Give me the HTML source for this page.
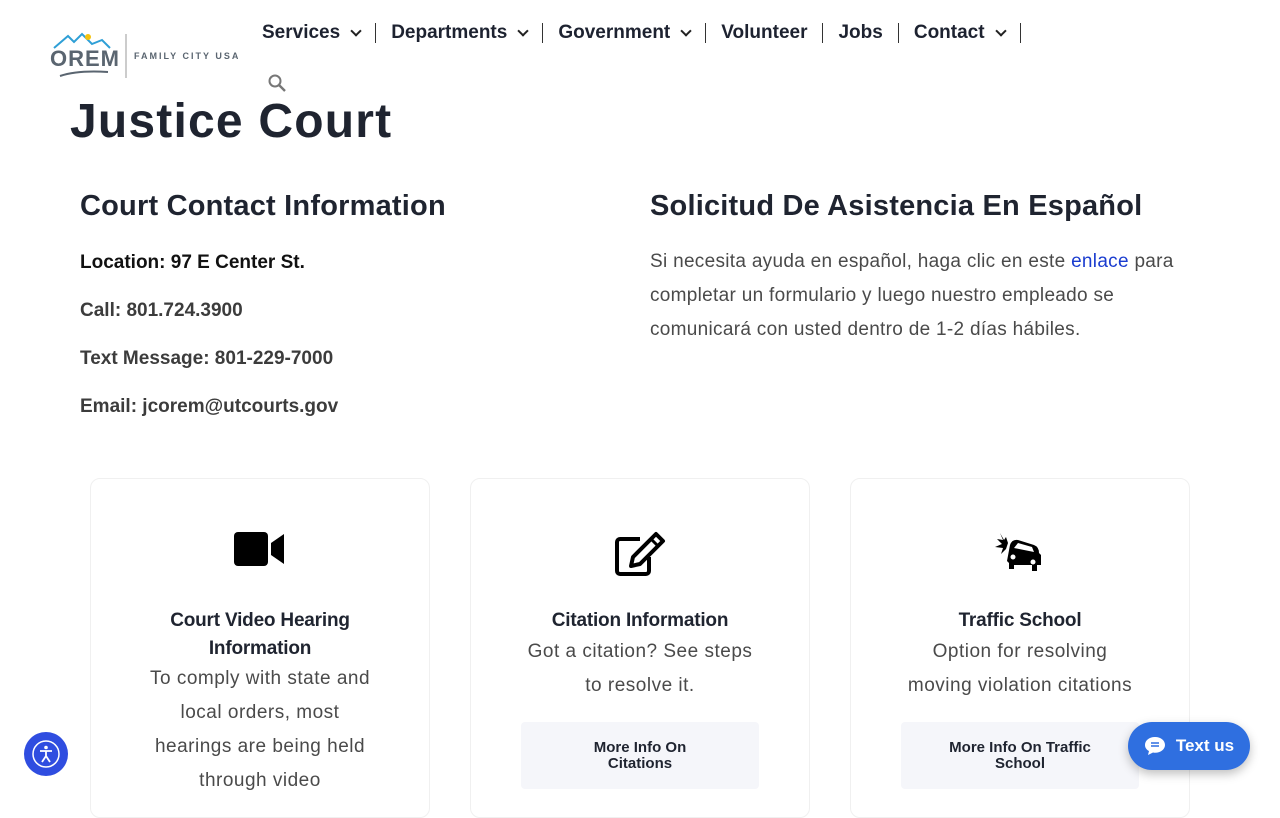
<!DOCTYPE html>
<html><head><meta charset="utf-8"><style>
*{margin:0;padding:0;box-sizing:border-box}
body{width:1280px;height:800px;overflow:hidden;background:#fff;font-family:"Liberation Sans",sans-serif;color:#1f2430;position:relative}
.nav{position:absolute;top:23px;left:262px;display:flex;align-items:center;font-weight:700;font-size:19px;color:#1d2230;letter-spacing:0}
.nav span{padding:0 15px;border-right:1px solid #333;line-height:20px;display:flex;align-items:center;gap:12px}
.nav span:first-child{padding-left:0}
.chev{width:8px;height:8px;border-right:2px solid #222;border-bottom:2px solid #222;transform:rotate(45deg);margin-top:-5px}
h1{position:absolute;left:70px;top:94px;font-size:48px;font-weight:700;color:#1f2430;letter-spacing:1.2px}
h2{font-size:29px;font-weight:700;color:#1f2430;letter-spacing:0.2px}
.l{position:absolute;left:80px;top:190px}
.l p{font-size:19px;font-weight:700;color:#3c3c3c;margin-top:24px;line-height:24px}
.l p:first-of-type{color:#111;margin-top:28px}
.r{position:absolute;left:650px;top:190px;width:560px}
.r p{font-size:19px;color:#4a4a4a;line-height:34px;margin-top:22px;letter-spacing:0.3px}
.r a{color:#1a3ccf;text-decoration:none}
.card{position:absolute;top:478px;width:340px;height:340px;border:1px solid #f0f0f0;border-radius:10px;text-align:center}
.card svg{position:absolute;left:50%;transform:translateX(-50%);top:52px}
.card h3{position:absolute;top:128px;width:100%;font-size:19px;font-weight:700;line-height:28px;color:#1f2430;letter-spacing:-0.2px}
.card .t{position:absolute;width:100%;font-size:19px;color:#4a4a4a;line-height:34px;letter-spacing:0.5px}
.btn{position:absolute;left:50px;top:243px;width:238px;height:67px;background:#f5f6fa;border-radius:4px;font-size:15px;font-weight:700;line-height:16px;display:flex;align-items:center;justify-content:center;color:#1f2430}
</style></head><body>
<svg style="position:absolute;left:48px;top:30px" width="190" height="52">
<path d="M6 18 L20 6 L26 12 L34 4 L44 14 L54 10 L62 18" fill="none" stroke="#2e9fd6" stroke-width="2"/>
<circle cx="40" cy="7" r="3" fill="#f4c20d"/>
<text x="2" y="36" font-family="Liberation Sans" font-weight="700" font-size="22" fill="#5a6570" letter-spacing="1">OREM</text>
<path d="M12 46 Q30 40 60 42" stroke="#5a6570" stroke-width="2" fill="none"/>
<line x1="78" y1="4" x2="78" y2="48" stroke="#999"/>
<text x="86" y="29" font-family="Liberation Sans" font-weight="700" font-size="9" fill="#5a6570" letter-spacing="2">FAMILY CITY USA</text>
</svg>
<div class="nav"><span>Services <i class="chev"></i></span><span>Departments <i class="chev"></i></span><span>Government <i class="chev"></i></span><span>Volunteer</span><span>Jobs</span><span>Contact <i class="chev"></i></span></div>
<svg style="position:absolute;left:268px;top:74px" width="18" height="18"><circle cx="7" cy="7" r="5.5" fill="none" stroke="#777" stroke-width="2"/><path d="M11 11 L17 17" stroke="#777" stroke-width="2.4"/></svg>
<h1>Justice Court</h1>
<div class="l"><h2>Court Contact Information</h2>
<p>Location: 97 E Center St.</p><p>Call: 801.724.3900</p><p>Text Message: 801-229-7000</p><p>Email: jcorem@utcourts.gov</p></div>
<div class="r"><h2>Solicitud De Asistencia En Español</h2>
<p>Si necesita ayuda en español, haga clic en este <a>enlace</a> para<br>completar un formulario y luego nuestro empleado se<br>comunicará con usted dentro de 1-2 días hábiles.</p></div>
<div class="card" style="left:90px"><svg width="52" height="36" viewBox="0 0 52 36"><rect x="0" y="1" width="34" height="34" rx="4"/><path d="M37 12 L50 3 V33 L37 24Z"/></svg>
<h3>Court Video Hearing<br>Information</h3><div class="t" style="top:183px">To comply with state and<br>local orders, most<br>hearings are being held<br>through video</div></div>
<div class="card" style="left:470px"><svg width="52" height="46" viewBox="0 0 52 46"><path d="M26 8 H6 a3 3 0 0 0 -3 3 V40 a3 3 0 0 0 3 3 H32 a3 3 0 0 0 3 -3 V26" fill="none" stroke="#000" stroke-width="4"/><path d="M42 3 L49 10 L26 33 L17 35 L19 26Z" fill="none" stroke="#000" stroke-width="4" stroke-linejoin="round"/><path d="M37 8 L44 15" stroke="#000" stroke-width="3"/></svg>
<h3>Citation Information</h3><div class="t" style="top:156px">Got a citation? See steps<br>to resolve it.</div><div class="btn">More Info On<br>Citations</div></div>
<div class="card" style="left:850px"><svg width="52" height="44" viewBox="0 0 52 44"><path d="M6 2 L9 9 L3 8 L8 13 L1 16 L9 17 L7 23 L12 18 L14 12 L12 6 L10 9Z"/><path d="M16 14 Q18 8 24 9 L40 14 Q45 16 45 22 L47 24 V34 H43 V40 H38 V34 H20 V38 H15 V32 L13 30 Z"/><circle cx="19" cy="26" r="2.5" fill="#fff"/><circle cx="39" cy="31" r="2.5" fill="#fff"/><path d="M20 17 L24 12 L38 16 L40 21Z" fill="#fff"/></svg>
<h3>Traffic School</h3><div class="t" style="top:156px">Option for resolving<br>moving violation citations</div><div class="btn">More Info On Traffic<br>School</div></div>
<div style="position:absolute;left:24px;top:732px;width:44px;height:44px;border-radius:50%;background:#2f4de0;display:flex;align-items:center;justify-content:center"><svg width="30" height="30" viewBox="0 0 30 30"><circle cx="15" cy="15" r="13" fill="none" stroke="#fff" stroke-width="1.5"/><circle cx="15" cy="8.5" r="1.8" fill="#fff"/><path d="M9 12 L21 12 M15 12 V17 L11 23 M15 17 L19 23" stroke="#fff" stroke-width="1.8" fill="none"/></svg></div>
<div style="position:absolute;left:1128px;top:722px;width:122px;height:48px;border-radius:24px;background:#2f6fe0;color:#fff;font-weight:700;font-size:17px;display:flex;align-items:center;justify-content:center;gap:10px;box-shadow:0 4px 10px rgba(0,0,0,.25)"><svg width="22" height="20" viewBox="0 0 22 20"><path d="M11 1 C5 1 1 4.5 1 9 C1 12 3 14 5 15 L4 19 L9 16.5 C10 16.7 10.5 16.8 11 16.8 C17 16.8 21 13 21 9 C21 4.5 17 1 11 1Z" fill="#fff"/><path d="M7 7 H15 M7 10 H15" stroke="#2f6fe0" stroke-width="1.6"/></svg>Text us</div>
</body></html>
